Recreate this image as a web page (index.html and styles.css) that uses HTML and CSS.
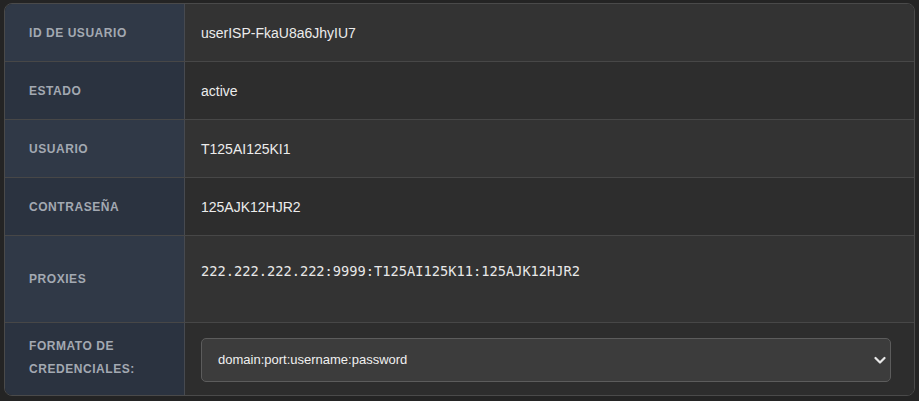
FILE: index.html
```html
<!DOCTYPE html>
<html lang="es">
<head>
<meta charset="utf-8">
<link rel="stylesheet" href="styles.css">
</head>
<body>
<div class="card">
  <div class="row odd">
    <div class="label">ID de usuario</div>
    <div class="value">userISP-FkaU8a6JhyIU7</div>
  </div>
  <div class="row even">
    <div class="label">Estado</div>
    <div class="value">active</div>
  </div>
  <div class="row odd">
    <div class="label">Usuario</div>
    <div class="value">T125AI125KI1</div>
  </div>
  <div class="row even">
    <div class="label">Contraseña</div>
    <div class="value">125AJK12HJR2</div>
  </div>
  <div class="row odd tall">
    <div class="label">Proxies</div>
    <div class="value top"><span class="mono">222.222.222.222:9999:T125AI125K11:125AJK12HJR2</span></div>
  </div>
  <div class="row even last">
    <div class="label multi">Formato de<br>credenciales:</div>
    <div class="value">
      <div class="select">
        <span>domain:port:username:password</span>
        <svg class="chev" width="12" height="10" viewBox="0 0 12 10"><path d="M1.5 3 L6 7.5 L10.5 3" fill="none" stroke="#e8e8e8" stroke-width="2.2" stroke-linecap="round" stroke-linejoin="round"/></svg>
      </div>
    </div>
  </div>
</div>
</body>
</html>
```
FILE: styles.css
```css
html, body {
  margin: 0;
  padding: 0;
  background: #242424;
}
body {
  padding: 3px 4px 5px 4px;
  font-family: "Liberation Sans", Arial, sans-serif;
}
.card {
  width: 911px;
  box-sizing: border-box;
  border: 1px solid #4a4a4a;
  border-radius: 8px;
  overflow: hidden;
}
.row {
  display: flex;
  height: 58px;
  box-sizing: border-box;
  border-bottom: 1px solid #474747;
}
.row.tall { height: 87px; }
.row.last { height: 72px; border-bottom: none; }
.label {
  width: 180px;
  flex: none;
  box-sizing: border-box;
  border-right: 1px solid #474a50;
  padding-left: 24px;
  display: flex;
  align-items: center;
  font-size: 12px;
  font-weight: bold;
  letter-spacing: 0.55px;
  text-transform: uppercase;
  color: #a3a9b2;
}
.label.multi { line-height: 23px; padding-bottom: 2px; }
.odd .label { background: #303947; }
.even .label { background: #2b3340; }
.value {
  flex: 1;
  padding-left: 16px;
  padding-right: 24px;
  display: flex;
  align-items: center;
  font-size: 14px;
  color: #ececec;
}
.odd .value { background: #333333; }
.even .value { background: #2d2d2d; }
.value.top { align-items: flex-start; padding-top: 27px; box-sizing: border-box; }
.mono {
  font-family: "DejaVu Sans Mono", "Liberation Mono", monospace;
  font-size: 13.7px;
  color: #e8e8e8;
}
.select {
  flex: 1;
  height: 44px;
  box-sizing: border-box;
  border: 1px solid #5c5c5c;
  border-radius: 5px;
  background: #3c3c3c;
  display: flex;
  align-items: center;
  justify-content: space-between;
  padding: 0 4px 0 16px;
  font-size: 13px;
  color: #f0f0f0;
  margin-top: 1px;
  margin-right: -1px;
}
```
